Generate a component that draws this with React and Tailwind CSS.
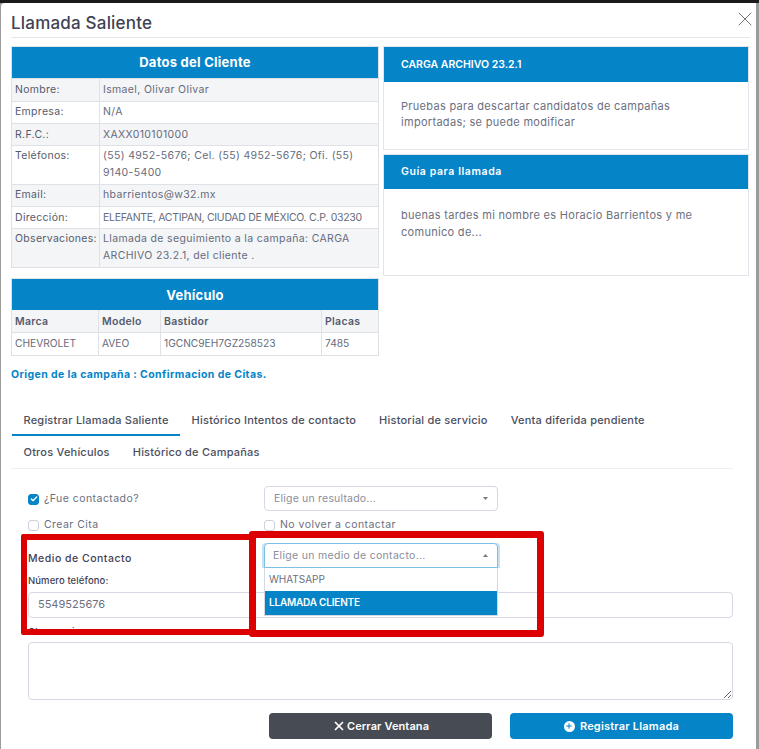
import { X, Check, Plus } from 'lucide-react';

const font = "font-['Inter','Open_Sans',sans-serif]";

const cliente = [
	{ label: 'Nombre:', value: 'Ismael, Olivar Olivar', shade: true, h: 'h-[23px]', pt: 'pt-[2px]' },
	{ label: 'Empresa:', value: 'N/A', h: 'h-[22px]', pt: 'pt-[1px]' },
	{ label: 'R.F.C.:', value: 'XAXX010101000', shade: true, h: 'h-[22px]', pt: 'pt-[2px]' },
	{ label: 'Teléfonos:', value: '(55) 4952-5676; Cel. (55) 4952-5676; Ofi. (55) 9140-5400', h: 'h-[39px]', pt: 'pt-[1px]' },
	{ label: 'Email:', value: 'hbarrientos@w32.mx', shade: true, h: 'h-[22px]', pt: 'pt-[1px]' },
	{ label: 'Dirección:', value: 'ELEFANTE, ACTIPAN, CIUDAD DE MÉXICO. C.P. 03230', h: 'h-[22px]', pt: 'pt-[2px]', tight: true },
	{ label: 'Observaciones:', value: 'Llamada de seguimiento a la campaña: CARGA ARCHIVO 23.2.1, del cliente .', shade: true, h: 'h-[39px]', pt: 'pt-[1px]' },
];

function ClienteTable() {
	return (
		<div className="border border-[#dfe1e6]">
			<div className="h-[31px] bg-[#0584c7] text-white text-[13px] tracking-[0.25px] font-bold flex items-center justify-center pt-[1px]">Datos del Cliente</div>
			{cliente.map((row) => (
				<div key={row.label} className={`flex border-t border-[#dfe1e6] first:border-t-0 ${row.h} ${row.shade ? 'bg-[#f4f5f7]' : 'bg-white'}`}>
					<div className={`w-[88px] shrink-0 border-r border-[#dfe1e6] pl-[3px] ${row.pt} text-[10.5px] tracking-[0.3px] leading-[17px] text-[#555b6d]`}>{row.label}</div>
					<div className={`flex-1 pl-[3px] ${row.pt} text-[10.5px] leading-[17px] text-[#666b7c] ${row.tight ? 'tracking-[-0.28px]' : 'tracking-[0.35px]'}`}>{row.value}</div>
				</div>
			))}
		</div>
	);
}

function VehiculoTable() {
	const cols = ['w-[87px]', 'w-[62px]', 'w-[161px]', 'flex-1'];
	const head = ['Marca', 'Modelo', 'Bastidor', 'Placas'];
	const body = ['CHEVROLET', 'AVEO', '1GCNC9EH7GZ258523', '7485'];
	return (
		<div className="border border-[#dfe1e6] mt-[10px]">
			<div className="h-[31px] bg-[#0584c7] text-white text-[13px] tracking-[0.25px] font-bold flex items-center justify-center pt-[3px]">Vehículo</div>
			<div className="flex h-[22px] bg-[#f4f5f7]">
				{head.map((t, i) => (
					<div key={t} className={`${cols[i]} border-r last:border-r-0 border-[#dfe1e6] pl-[3px] text-[10.5px] tracking-[0.3px] leading-[23px] font-semibold text-[#555b6d]`}>{t}</div>
				))}
			</div>
			<div className="flex h-[23px] border-t border-[#dfe1e6] bg-white">
				{body.map((t, i) => (
					<div key={t} className={`${cols[i]} border-r last:border-r-0 border-[#dfe1e6] pl-[3px] text-[10.2px] leading-[21px] text-[#666b7c]`}>{t}</div>
				))}
			</div>
		</div>
	);
}

function InfoCard({ title, text, headH, bodyH, titleClass, bodyClass }) {
	return (
		<div className="border border-[#e4e5ec]">
			<div className={`bg-[#0584c7] text-white text-[10.5px] font-semibold flex items-center pl-[17px] ${headH} ${titleClass}`}>{title}</div>
			<div className={`bg-white px-[17px] text-[11px] tracking-[0.3px] text-[#6b6f80] ${bodyH} ${bodyClass}`}>{text}</div>
		</div>
	);
}

function Tab({ children, active }) {
	return (
		<div className={`h-[32px] px-[11.5px] flex items-center text-[11px] tracking-[0.21px] font-medium text-[#4a4e5e] ${active ? 'border-b-2 border-[#0584c7]' : ''}`}>
			<span className={active ? 'pt-[2px]' : 'pt-[1px]'}>{children}</span>
		</div>
	);
}

function Caret({ up }) {
	return (
		<svg width="5" height="3" viewBox="0 0 5 3" className="fill-[#777]">
			<path d={up ? 'M2.5 0 5 3H0z' : 'M0 0h5L2.5 3z'} />
		</svg>
	);
}

function CheckRow({ label, checked, className }) {
	return (
		<label className={`flex items-center gap-[5px] text-[10.5px] tracking-[0.45px] text-[#6b6f80] ${className}`}>
			<span className={`w-[11px] h-[11px] rounded-[3px] border flex items-center justify-center ${checked ? 'bg-[#0584c7] border-[#0584c7]' : 'bg-white border-[#cfd1dc]'}`}>
				{checked && <Check size={8} strokeWidth={4} className="text-white" />}
			</span>
			{label}
		</label>
	);
}

export default function App() {
	return (
		<div className={`${font} relative w-[759px] h-[749px] overflow-hidden bg-[#9b9b9b]`}>
			<div className="h-[3px] bg-[#1a1a1a]" />
			<div className="ml-px mr-[3px] h-[746px] bg-white rounded-tl-[4px] pl-[10px] pr-[6px]">
				<div className="h-[35px] border-b border-[#e6e7ec] flex items-center justify-between">
					<h1 className="text-[17px] tracking-[0.2px] font-medium text-[#3f4254] pt-[8px]">Llamada Saliente</h1>
					<X size={24} strokeWidth={1} className="text-[#777] -mr-[7px] mb-[3px]" />
				</div>

				<div className="flex gap-[4px] mt-[8px]">
					<div className="w-[368px]">
						<ClienteTable />
						<VehiculoTable />
						<div className="mt-[12px] text-[10.5px] tracking-[0.4px] font-bold leading-[14px] text-[#0584c7]">Origen de la campaña : Confirmacion de Citas.</div>
					</div>
					<div className="w-[366px] flex flex-col gap-[4px]">
						<InfoCard
							title="CARGA ARCHIVO 23.2.1"
							text="Pruebas para descartar candidatos de campañas importadas; se puede modificar"
							headH="h-[35px]"
							bodyH="h-[67px]"
							bodyClass="pt-[16px] leading-[16px]"
						/>
						<InfoCard
							title="Guía para llamada"
							text="buenas tardes mi nombre es Horacio Barrientos y me comunico de..."
							headH="h-[34px]"
							bodyH="h-[86px]"
							titleClass="tracking-[0.6px]"
							bodyClass="pt-[18px] leading-[17px]"
						/>
					</div>
				</div>

				<div className="mt-[22px] w-[722px] border-b border-[#eceef2]">
					<div className="flex pl-px">
						<Tab active>Registrar Llamada Saliente</Tab>
						<Tab>Histórico Intentos de contacto</Tab>
						<Tab>Historial de servicio</Tab>
						<Tab>Venta diferida pendiente</Tab>
					</div>
					<div className="flex pl-px">
						<Tab>Otros Vehículos</Tab>
						<Tab>Histórico de Campañas</Tab>
					</div>
				</div>

				<div className="relative pl-[17px] w-[722px]">
					<div className="flex mt-[17px] h-[26px]">
						<CheckRow label="¿Fue contactado?" checked className="w-[236px] h-[26px]" />
						<div className="w-[234px] h-[25px] border border-[#d6d8e3] rounded-[4px] px-[9px] flex items-center justify-between text-[10.5px] tracking-[0.2px] text-[#8a8e9c]">
							Elige un resultado...
							<Caret />
						</div>
					</div>
					<div className="flex mt-[5px] h-[16px]">
						<CheckRow label="Crear Cita" className="w-[236px]" />
						<CheckRow label="No volver a contactar" />
					</div>
					<div className="mt-[10px] pt-[8px] text-[10.5px] tracking-[0.5px] leading-[16px] font-medium text-[#3f4254]">Medio de Contacto</div>
					<div className="mt-[7px] text-[9.5px] tracking-[0.1px] leading-[14px] font-medium text-[#3f4254]">Número teléfono:</div>
					<div className="mt-[4px] h-[26px] border border-[#d6d8e3] rounded-[4px] pl-[9px] pb-px flex items-center text-[11px] text-[#6b6f80]">5549525676</div>
					<div className="mt-[7px] text-[9.5px] leading-[14px] font-medium text-[#3f4254]">Observaciones:</div>
					<textarea className="block mt-[3px] w-full h-[58px] border border-[#d6d8e3] rounded-[4px] outline-none bg-white" />
					<div className="flex justify-end gap-[18px] mt-[13px]">
						<button className="w-[223px] h-[26px] rounded-[4px] bg-[#474c54] text-white text-[11px] tracking-[0.1px] font-semibold flex items-center justify-center gap-[1px]">
							<X size={14} strokeWidth={3} />
							Cerrar Ventana
						</button>
						<button className="w-[223px] h-[26px] rounded-[4px] bg-[#0584c7] text-white text-[11px] tracking-[0.2px] font-semibold flex items-center justify-center gap-[5px]">
							<span className="w-[11px] h-[11px] rounded-full bg-white flex items-center justify-center">
								<Plus size={8} strokeWidth={3} className="text-[#0584c7]" />
							</span>
							Registrar Llamada
						</button>
					</div>

					{/* desplegable abierto */}
					<div className="absolute left-[253px] top-[57px] w-[234px] z-10">
						<div className="h-[25px] border border-[#7cc0e6] rounded-t-[4px] bg-white pl-[8px] pr-[9px] flex items-center justify-between text-[10.5px] tracking-[0.3px] text-[#8a8e9c] shadow-[2px_0_0_#c4e2f3,-2px_0_0_#c4e2f3]">
							Elige un medio de contacto...
							<Caret up />
						</div>
						<div className="border-x border-b border-[#d6d8e3] bg-white">
							<div className="h-[23px] pl-[4px] pb-[1px] flex items-center text-[10px] text-[#6b6f80]">WHATSAPP</div>
							<div className="h-[24px] pl-[4px] pb-[1px] flex items-center text-[10px] tracking-[-0.2px] font-semibold text-white bg-[#0584c7]">LLAMADA CLIENTE</div>
						</div>
					</div>
				</div>
			</div>

			{/* recuadros rojos de la anotación */}
			<div className="absolute left-[21px] top-[534px] w-[235px] h-[101px] border-[6px] border-[#dc0000] rounded-[2px] z-20" />
			<div className="absolute left-[249px] top-[531px] w-[295px] h-[106px] border-[7px] border-[#dc0000] rounded-[3px] z-20" />
		</div>
	);
}
